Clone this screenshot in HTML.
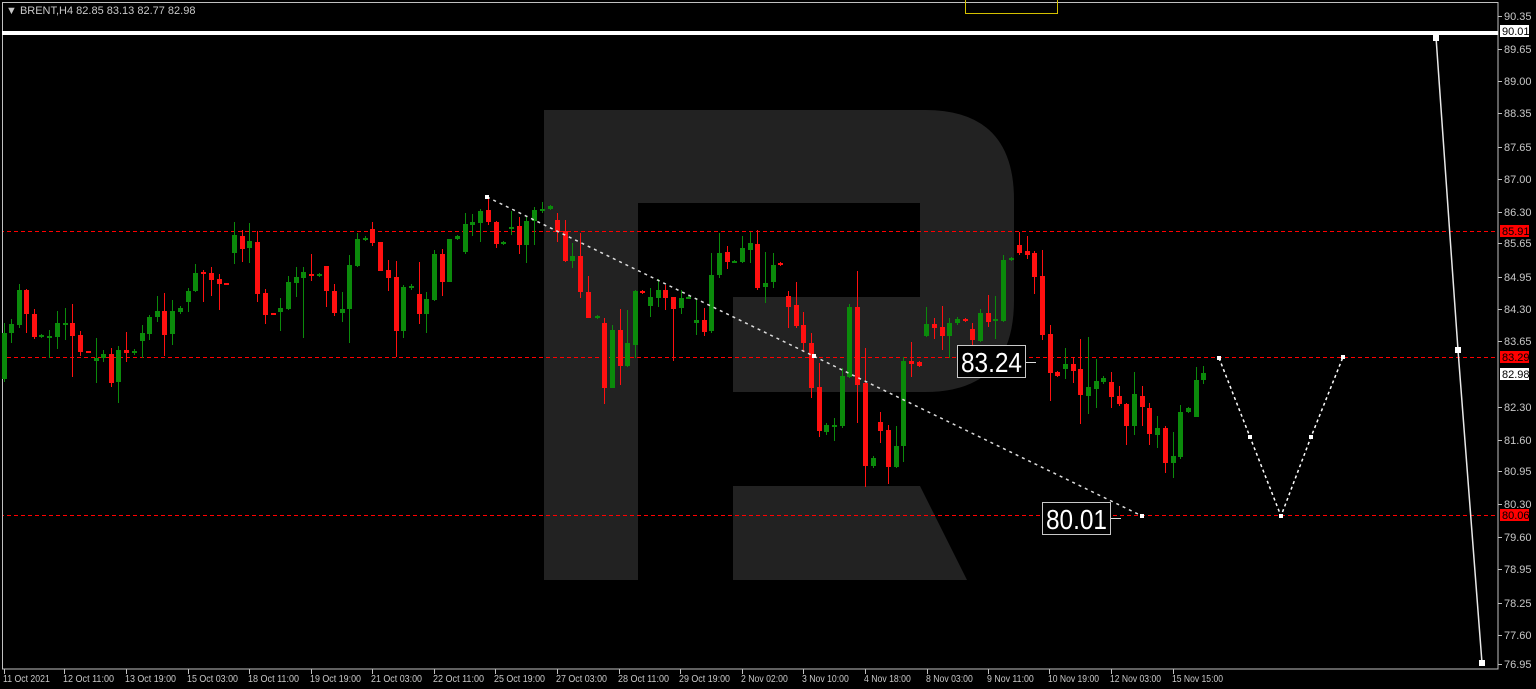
<!DOCTYPE html>
<html><head><meta charset="utf-8"><style>
html,body{margin:0;padding:0;background:#000;width:1536px;height:689px;overflow:hidden}
svg{display:block}
text{font-family:"Liberation Sans",sans-serif}
</style></head><body>
<svg id="s" width="1536" height="689" xmlns="http://www.w3.org/2000/svg">
<rect width="1536" height="689" fill="#000"/>
<g fill="#222">
<rect x="544" y="110" width="94" height="470"/>
<path d="M638,110 H925 Q1014,110 1014,200 V300 Q1014,392 925,392 H733 V297 H920 V203 H638 Z"/>
<path d="M733,486 H920 L967,580 H733 Z"/>
</g>
<rect x="2.5" y="2.5" width="1495.5" height="666.5" fill="none" stroke="#c0c0c0" stroke-width="1"/>
<rect x="965.5" y="-2" width="92" height="15.5" fill="none" stroke="#d4c000" stroke-width="1"/>
<g fill="#ff0000" shape-rendering="crispEdges">
<rect x="3" y="231" width="1495" height="1" fill="url(#dash)"/>
</g>
<defs><pattern id="dp" width="7" height="1" patternUnits="userSpaceOnUse"><rect width="4" height="1" fill="#ff0000"/></pattern></defs>
<g shape-rendering="crispEdges">
<rect x="3" y="231" width="1495" height="1" fill="url(#dp)"/>
<rect x="3" y="357" width="1495" height="1" fill="url(#dp)"/>
<rect x="3" y="515" width="1495" height="1" fill="url(#dp)"/>
</g>
<g id="c" shape-rendering="crispEdges"></g>
<rect x="2" y="31" width="1496" height="4" fill="#fff"/>
<line x1="487" y1="197" x2="1142" y2="516" stroke="#ddd" stroke-width="1.5" stroke-dasharray="3,4"/>
<polyline points="1219,358 1250,437 1281,516 1311,437 1343,357" fill="none" stroke="#fff" stroke-width="1.5" stroke-dasharray="3,3"/>
<g fill="#fff"><rect x="1217" y="356" width="4" height="4"/><rect x="1248" y="435" width="4" height="4"/><rect x="1279" y="514" width="4" height="4"/><rect x="1309" y="435" width="4" height="4"/><rect x="1341" y="355" width="4" height="4"/><rect x="1140" y="514" width="4" height="4"/><rect x="485" y="195" width="4" height="4"/><rect x="812" y="354" width="4" height="4"/></g>
<polyline points="1436,37 1458,350 1482,663" fill="none" stroke="#e8e8e8" stroke-width="1.5"/>
<g fill="#fff"><rect x="1433" y="35" width="6" height="6"/><rect x="1455" y="347" width="6" height="6"/><rect x="1479" y="660" width="6" height="6"/></g>
<rect x="957.5" y="345.5" width="68" height="32" fill="#000" stroke="#c8c8c8"/>
<text x="961" y="372" font-size="28" fill="#fff" textLength="61" lengthAdjust="spacingAndGlyphs">83.24</text>
<line x1="1026" y1="362.5" x2="1036" y2="362.5" stroke="#ddd"/>
<rect x="1042.5" y="502.5" width="68" height="32" fill="#000" stroke="#c8c8c8"/>
<text x="1046" y="529" font-size="28" fill="#fff" textLength="61" lengthAdjust="spacingAndGlyphs">80.01</text>
<line x1="1111" y1="518.5" x2="1121" y2="518.5" stroke="#ddd"/>
<text x="6" y="14" font-size="11" fill="#c8c8c8">▼  BRENT,H4  82.85 83.13 82.77 82.98</text>
<g font-size="11" fill="#c8c8c8" id="pa"></g>
<rect x="1500" y="25" width="29" height="12" fill="#fff"/><text x="1502" y="35" font-size="11" fill="#000">90.01</text>
<rect x="1500" y="225" width="29" height="12" fill="#f00"/><text x="1502" y="235" font-size="11" fill="#000">85.91</text>
<rect x="1500" y="351" width="29" height="12" fill="#f00"/><text x="1502" y="361" font-size="11" fill="#000">83.29</text>
<rect x="1500" y="368" width="29" height="12" fill="#fff"/><text x="1502" y="378" font-size="11" fill="#000">82.98</text>
<rect x="1500" y="509" width="29" height="12" fill="#f00"/><text x="1502" y="519" font-size="11" fill="#000">80.06</text>
<g font-size="10.5" fill="#c8c8c8" id="ta"></g>
</svg>
<script>
var NS="http://www.w3.org/2000/svg";
function el(t,a,p){var e=document.createElementNS(NS,t);for(var k in a)e.setAttribute(k,a[k]);p.appendChild(e);return e;}
var d="4,323,382,333,379,g;11,319,343,324,333,g;19,284,328,290,325,g;26,289,333,290,314,r;34,309,339,314,337,r;41,334,338,335,337,g;49,330,358,336,338,g;57,311,349,323,337,g;65,308,340,323,325,g;72,304,377,323,336,r;80,331,356,335,352,r;88,351,353,351,353,r;96,338,383,358,361,g;103,350,362,354,358,g;111,348,387,354,383,r;118,346,403,350,382,g;126,332,362,350,353,r;134,349,355,351,353,g;142,325,358,333,341,g;149,315,340,317,334,g;157,296,322,311,317,g;164,293,356,311,335,r;172,300,345,311,334,g;180,306,314,308,312,g;188,288,312,291,302,g;195,264,292,273,291,g;203,270,302,272,274,r;211,267,296,273,280,r;219,274,310,279,284,r;226,283,285,283,285,r;234,222,264,235,253,g;242,230,262,236,249,r;249,223,263,241,248,g;257,231,302,242,294,r;265,289,324,293,315,r;273,313,315,313,315,r;280,298,331,308,312,g;288,276,310,282,309,g;296,267,297,277,283,g;303,267,338,272,278,g;311,254,281,274,276,r;319,273,277,274,276,g;326,266,307,266,291,r;334,284,316,291,313,r;342,292,322,309,313,g;349,255,343,265,309,g;357,233,267,239,266,g;365,236,241,238,240,g;372,222,246,229,243,r;380,242,271,242,271,r;388,260,291,270,278,r;396,261,357,277,331,r;403,285,338,287,331,g;411,284,290,286,288,g;419,262,324,294,314,r;426,292,333,299,314,g;434,250,301,254,300,g;442,249,296,254,282,r;449,239,282,239,282,g;457,235,240,236,239,g;465,213,254,224,252,g;472,214,236,222,225,g;480,209,242,211,223,g;488,197,225,210,222,r;496,221,248,222,244,r;503,241,245,242,244,g;511,211,235,227,229,g;519,217,254,226,245,r;526,216,263,221,245,g;534,207,245,210,221,g;542,202,213,209,211,g;550,205,210,206,209,g;557,213,242,220,232,r;565,220,262,231,261,r;572,243,268,256,261,g;580,233,298,256,292,r;588,276,318,292,318,r;597,315,319,316,318,g;604,318,404,323,388,r;612,325,388,330,388,g;620,309,385,330,366,r;627,310,367,343,366,g;635,290,358,291,345,g;642,290,294,291,293,r;650,288,317,297,306,g;658,279,307,290,298,g;665,285,310,290,298,r;673,297,361,297,309,r;681,290,314,298,308,g;688,296,299,297,299,g;696,298,335,320,323,g;704,308,336,320,332,r;711,253,333,275,331,g;719,233,278,253,275,g;727,246,269,252,262,r;734,260,263,261,263,g;742,236,263,248,262,g;750,232,263,243,250,g;757,230,290,244,288,r;765,252,303,283,287,g;773,253,288,265,282,g;780,262,266,263,265,r;788,291,328,296,307,r;796,282,328,305,326,r;803,312,352,325,343,r;811,333,398,343,388,r;819,363,437,387,431,r;826,423,435,425,432,g;834,418,441,425,427,g;842,368,428,376,426,g;849,304,378,307,377,g;857,271,423,307,385,r;865,348,487,383,466,r;873,456,468,458,466,g;880,412,443,422,431,r;888,425,484,430,467,r;896,426,468,446,467,g;903,357,462,361,446,g;911,342,377,361,364,r;919,361,367,362,366,r;926,307,337,324,336,g;934,318,339,324,328,r;942,306,350,327,336,r;949,318,358,323,336,g;957,317,325,319,323,g;965,318,322,319,321,r;972,323,347,329,340,r;980,309,342,313,341,g;988,295,327,313,322,r;995,296,339,319,321,g;1003,255,322,260,321,g;1011,257,261,258,260,g;1019,232,255,245,253,r;1027,236,259,251,255,r;1034,251,294,253,277,r;1042,250,340,276,335,r;1050,325,401,334,373,r;1057,371,377,372,376,r;1065,348,379,364,369,g;1073,357,383,364,371,r;1080,339,424,369,395,r;1088,337,414,387,396,g;1096,359,408,381,389,g;1103,376,384,378,382,g;1111,372,408,382,397,r;1119,386,406,396,404,r;1126,403,445,404,426,r;1134,372,435,394,426,g;1142,386,426,396,407,r;1149,403,445,408,434,r;1157,416,448,428,435,g;1165,426,473,428,463,r;1173,432,478,456,463,g;1180,405,459,412,457,g;1188,407,413,408,412,g;1196,367,417,380,417,g;1203,366,384,373,380,g";
var g=document.getElementById("c");
d.split(";").forEach(function(s){var a=s.split(",");var x=+a[0],hi=+a[1],lo=+a[2],bt=+a[3],bb=+a[4];var col=a[5]=="g"?"#0b8a0b":"#ff1010";
el("rect",{x:x,y:hi,width:1,height:Math.max(1,lo-hi),fill:col},g);
el("rect",{x:x-2,y:bt,width:5,height:Math.max(2,bb-bt),fill:col},g);});
var pa=document.getElementById("pa");
[["90.35",16],["89.65",49],["89.00",81],["88.35",113],["87.65",147],["87.00",179],["86.30",212],["85.65",243],["84.95",277],["84.30",309],["83.65",341],["82.30",407],["81.60",440],["80.95",471],["80.30",504],["79.60",537],["78.95",569],["78.25",603],["77.60",635],["76.95",664]].forEach(function(p){
el("rect",{x:1498,y:p[1],width:4,height:1,fill:"#c0c0c0"},pa);var t=el("text",{x:1504,y:p[1]+4},pa);t.textContent=p[0];});
var ta=document.getElementById("ta");
[["11 Oct 2021",4],["12 Oct 11:00",64],["13 Oct 19:00",126],["15 Oct 03:00",188],["18 Oct 11:00",249],["19 Oct 19:00",311],["21 Oct 03:00",372],["22 Oct 11:00",434],["25 Oct 19:00",495],["27 Oct 03:00",557],["28 Oct 11:00",619],["29 Oct 19:00",680],["2 Nov 02:00",742],["3 Nov 10:00",803],["4 Nov 18:00",865],["8 Nov 03:00",927],["9 Nov 11:00",988],["10 Nov 19:00",1049],["12 Nov 03:00",1111],["15 Nov 15:00",1173]].forEach(function(p){
el("rect",{x:p[1],y:669,width:1,height:5,fill:"#c0c0c0"},ta);var t=el("text",{x:p[1]-1,y:682,textLength:(p[0].length*4.25).toFixed(1),lengthAdjust:"spacingAndGlyphs"},ta);t.textContent=p[0];});
</script>
</body></html>
